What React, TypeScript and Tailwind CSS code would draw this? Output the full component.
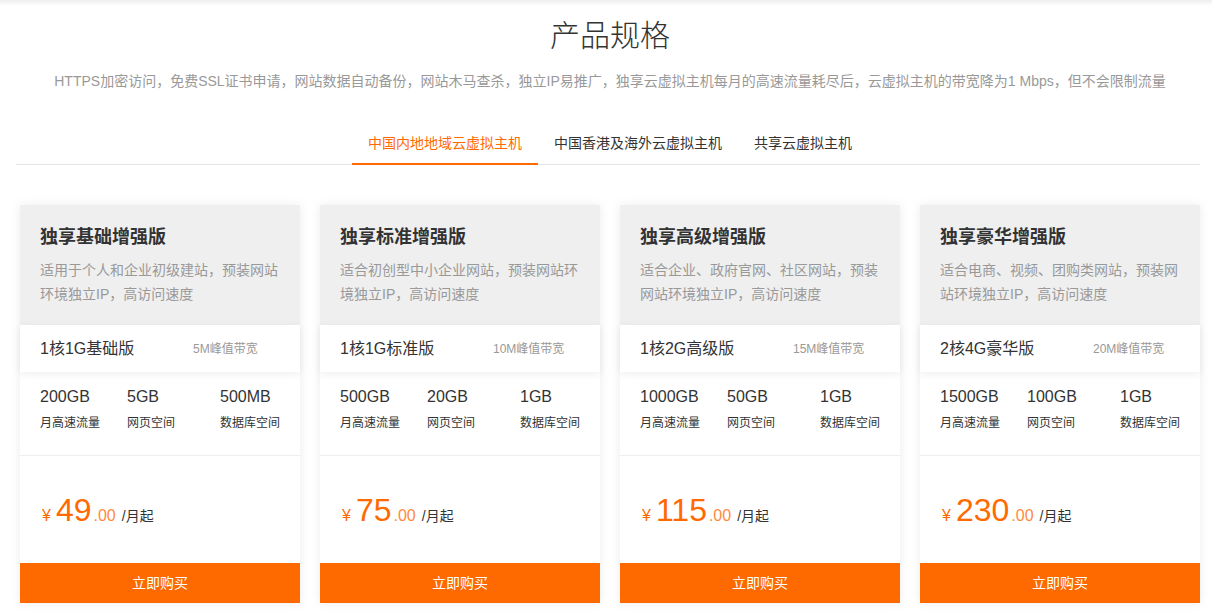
import React from "react";

type Plan = {
  name: string;
  desc: string;
  spec: string;
  bw: string;
  traffic: string;
  web: string;
  db: string;
  price: string;
};

const plans: Plan[] = [
  { name: "独享基础增强版", desc: "适用于个人和企业初级建站，预装网站环境独立IP，高访问速度", spec: "1核1G基础版", bw: "5M峰值带宽", traffic: "200GB", web: "5GB", db: "500MB", price: "49" },
  { name: "独享标准增强版", desc: "适合初创型中小企业网站，预装网站环境独立IP，高访问速度", spec: "1核1G标准版", bw: "10M峰值带宽", traffic: "500GB", web: "20GB", db: "1GB", price: "75" },
  { name: "独享高级增强版", desc: "适合企业、政府官网、社区网站，预装网站环境独立IP，高访问速度", spec: "1核2G高级版", bw: "15M峰值带宽", traffic: "1000GB", web: "50GB", db: "1GB", price: "115" },
  { name: "独享豪华增强版", desc: "适合电商、视频、团购类网站，预装网站环境独立IP，高访问速度", spec: "2核4G豪华版", bw: "20M峰值带宽", traffic: "1500GB", web: "100GB", db: "1GB", price: "230" },
];

function Card({ p }: { p: Plan }) {
  return (
    <div className="flex flex-col bg-white shadow-[0_0_10px_rgba(0,0,0,0.08)]">
      <div className="h-[120px] bg-[#efefef] px-5 pt-5">
        <div className="text-[18px] leading-[24px] font-bold text-[#333]">{p.name}</div>
        <div className="mt-[9px] text-[14px] leading-[24px] text-[#999]">{p.desc}</div>
      </div>
      <div className="relative flex h-[47px] items-center bg-white px-5 shadow-[0_2px_8px_rgba(0,0,0,0.07)]">
        <div className="w-[153px] text-[16px] text-[#333]">{p.spec}</div>
        <div className="text-[12px] text-[#999]">{p.bw}</div>
      </div>
      <div className="flex whitespace-nowrap border-b border-[#eeeeee] px-5 pt-[14px] pb-[23px] text-[#333]">
        <div className="w-[88px]">
          <div className="text-[16px] leading-[22px]">{p.traffic}</div>
          <div className="mt-[6px] text-[12px] leading-[18px]">月高速流量</div>
        </div>
        <div className="w-[93px]">
          <div className="text-[16px] leading-[22px]">{p.web}</div>
          <div className="mt-[6px] text-[12px] leading-[18px]">网页空间</div>
        </div>
        <div className="pl-px">
          <div className="text-[16px] leading-[22px]">{p.db}</div>
          <div className="mt-[6px] text-[12px] leading-[18px]">数据库空间</div>
        </div>
      </div>
      <div className="flex h-[107px] items-baseline pl-[22px] pt-[38px]">
        <span className="text-[16px] leading-none text-[#ff6a00]">¥</span>
        <span className="ml-[5px] text-[32px] leading-[32px] text-[#ff6a00]">{p.price}</span>
        <span className="ml-[2px] text-[16px] leading-none text-[#ff8a3d]">.00</span>
        <span className="ml-[6px] text-[14px] leading-none text-[#333]">/月起</span>
      </div>
      <button className="h-[40px] w-full bg-[#ff6a00] text-[14px] text-white">立即购买</button>
    </div>
  );
}

export default function App() {
  const font = { fontFamily: '"Liberation Sans", "Noto Sans CJK SC", sans-serif' };
  return (
    <div className="min-h-[613px] w-[1212px] bg-white" style={font}>
      <div className="h-[6px] bg-gradient-to-b from-[#eeeeee] to-white" />
      <div className="ml-[20px] w-[1180px] pt-[10px]">
        <h1 className="text-center text-[30px] leading-[40px] font-light text-[#333]">产品规格</h1>
        <p className="mt-[15px] text-center text-[14px] leading-[20px] text-[#999] whitespace-nowrap">
          HTTPS加密访问，免费SSL证书申请，网站数据自动备份，网站木马查杀，独立IP易推广，独享云虚拟主机每月的高速流量耗尽后，云虚拟主机的带宽降为1 Mbps，但不会限制流量
        </p>
        <div className="ml-[-4px] mt-[42px] flex justify-center border-b border-[#e5e5e5] pl-[4px]">
          <div className="-mb-px border-b-2 border-[#ff6a00] px-4 pb-[10px] text-[14px] leading-[20px] text-[#ff6a00]">中国内地地域云虚拟主机</div>
          <div className="-mb-px px-4 pb-[10px] text-[14px] leading-[20px] text-[#333]">中国香港及海外云虚拟主机</div>
          <div className="-mb-px px-4 pb-[10px] text-[14px] leading-[20px] text-[#333]">共享云虚拟主机</div>
        </div>
        <div className="mt-[40px] grid grid-cols-4 gap-5">
          {plans.map((p) => (
            <Card key={p.name} p={p} />
          ))}
        </div>
      </div>
    </div>
  );
}
